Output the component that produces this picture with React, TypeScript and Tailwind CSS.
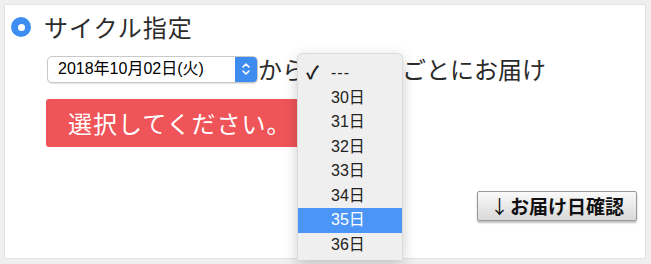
import React from "react";

const FONT = { fontFamily: '"Noto Sans CJK JP", "Noto Sans", sans-serif' };
const NUM_FONT = { fontFamily: '"Liberation Sans", "Noto Sans CJK JP", sans-serif' };

function CycleMenu() {
  const days = ["30日", "31日", "32日", "33日", "34日", "35日", "36日"];
  return (
    <div
      className="absolute left-[297px] top-[53px] w-[106px] h-[207px] overflow-hidden rounded-t-[6px] border border-[#dcdcdc] border-b-0 bg-[#efefef] pt-[7px] shadow-[0_4px_14px_rgba(0,0,0,0.2)]"
      style={NUM_FONT}
    >
      <div className="flex h-[24.5px] items-center text-[16px] text-[#222]">
        <span className="w-[33px] pl-[8px] text-[18px] font-bold">✓</span>
        <span className="tracking-[1px]">---</span>
      </div>
      {days.map((d) => (
        <div
          key={d}
          className={
            d === "35日"
              ? "flex h-[24.5px] items-center bg-[#4b95f7] pl-[33px] text-[16px] text-white"
              : "flex h-[24.5px] items-center pl-[33px] text-[16px] text-[#222]"
          }
        >
          {d}
        </div>
      ))}
    </div>
  );
}

export default function App() {
  return (
    <div className="relative w-[651px] h-[264px] bg-[#efefef] pt-[4px] pl-[4px] pr-[5px] pb-[5px]" style={FONT}>
      <div className="flex h-full flex-col border border-[#e3e3e3] bg-white pl-[6px] pr-[8px] pt-[6px]">
        {/* cycle title */}
        <div className="flex items-center gap-[13px]">
          <div className="flex h-[20px] w-[20px] items-center justify-center rounded-full bg-[#3d8ef0]">
            <div className="h-[7px] w-[7px] rounded-full bg-white" />
          </div>
          <span className="text-[24px] leading-[32px] tracking-[1px] text-[#2b2b2b]">サイクル指定</span>
        </div>

        {/* date row */}
        <div className="mt-[11px] ml-[36px] flex items-center">
          <div className="flex h-[27px] w-[211px] items-center overflow-hidden rounded-[5px] border border-[#c9c9c9] bg-white shadow-[0_1px_1px_rgba(0,0,0,0.12)]">
            <span className="flex-1 pl-[10px] text-[16px] text-black" style={NUM_FONT}>
              2018年10月02日(火)
            </span>
            <div className="flex h-full w-[22px] flex-col items-center justify-center bg-[#3f8cf0] text-white">
              <svg width="10" height="16" viewBox="0 0 10 16" fill="none" stroke="white" strokeWidth="1.6" strokeLinecap="round" strokeLinejoin="round">
                <path d="M2 6 L5 3 L8 6" />
                <path d="M2 10 L5 13 L8 10" />
              </svg>
            </div>
          </div>
          <span className="text-[24px] leading-[30px] text-[#2b2b2b]">から</span>
          <div className="w-[96px]" />
          <span className="text-[24px] leading-[30px] text-[#2b2b2b]">ごとにお届け</span>
        </div>

        {/* validation message */}
        <div className="mt-[15px] ml-[35px] flex h-[48px] w-[265px] items-center rounded-[3px] bg-[#ef5459] pl-[22px] text-[24px] tracking-[1px] text-white">
          選択してください。
        </div>

        {/* confirm button */}
        <div className="mt-[44px] flex justify-end">
          <button className="flex h-[30px] w-[160px] items-center justify-center gap-[1px] rounded-[2px] border border-[#9a9a9a] bg-gradient-to-b from-[#fafafa] to-[#d9d9d9] text-[19px] font-bold text-[#111] shadow-[0_2px_2px_rgba(0,0,0,0.25)]">
            <span className="font-normal">↓</span>
            <span>お届け日確認</span>
          </button>
        </div>
      </div>
      <CycleMenu />
    </div>
  );
}
